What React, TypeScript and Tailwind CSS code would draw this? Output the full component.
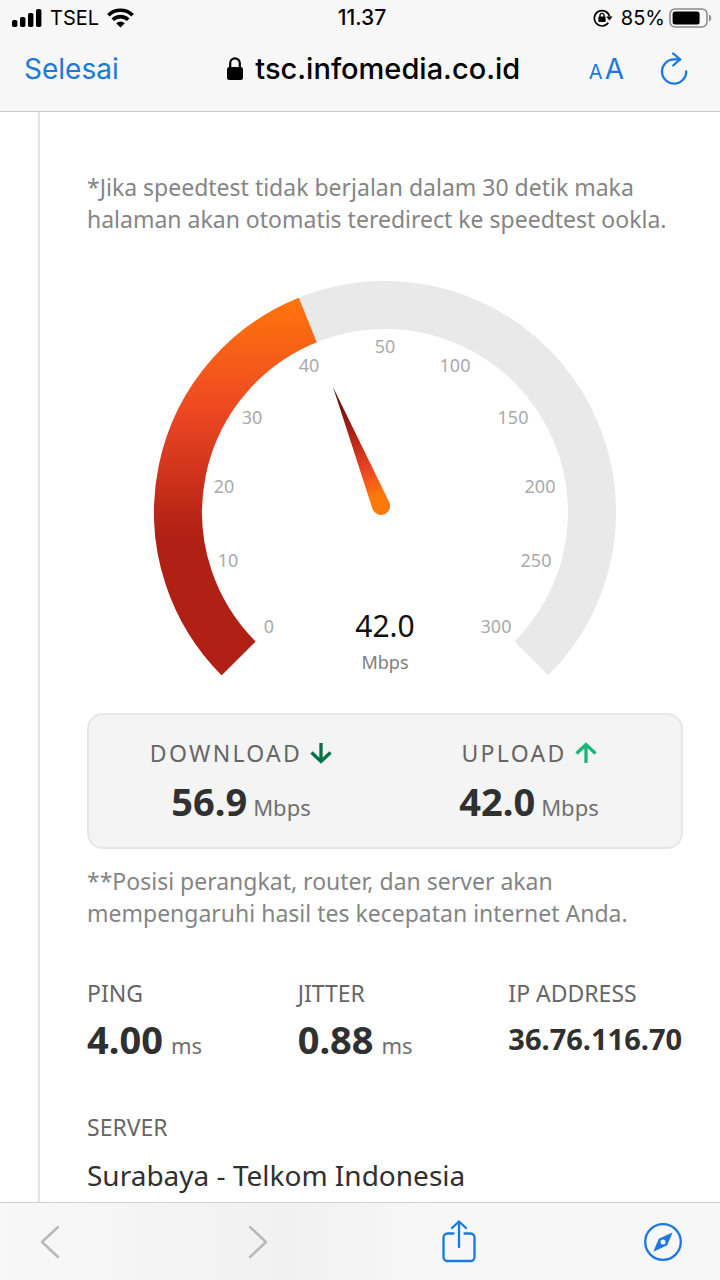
import React from "react";

type Tick = { value: number; x: number; y: number };

const ticks: Tick[] = [
  { value: 0, x: 115, y: 352 },
  { value: 10, x: 74, y: 286 },
  { value: 20, x: 70, y: 212 },
  { value: 30, x: 98, y: 143 },
  { value: 40, x: 155, y: 91 },
  { value: 50, x: 231, y: 72 },
  { value: 100, x: 301, y: 91 },
  { value: 150, x: 359, y: 143 },
  { value: 200, x: 386, y: 212 },
  { value: 250, x: 382, y: 286 },
  { value: 300, x: 342, y: 352 },
];

function StatusBar() {
  return (
    <div className="flex h-9 items-center px-2 text-xl text-black">
      <div className="flex flex-1 items-center gap-2 pl-1">
        <svg width="30" height="20" viewBox="0 0 30 20" aria-hidden="true">
          <rect x="0" y="12" width="5.4" height="7" rx="1.8" />
          <rect x="8" y="9" width="5.4" height="10" rx="1.8" />
          <rect x="16" y="5" width="5.4" height="14" rx="1.8" />
          <rect x="24" y="1" width="5.4" height="18" rx="1.8" />
        </svg>
        <span>TSEL</span>
        <svg width="27" height="20" viewBox="0 0 27 20" fill="none" stroke="#000" strokeWidth="3.6" aria-hidden="true">
          <path d="M1.4 7.2a17.2 17.2 0 0 1 24.2 0" />
          <path d="M5.8 11.8a11 11 0 0 1 15.4 0" />
          <path d="M13.5 19.4 9.2 15.2a6.2 6.2 0 0 1 8.6 0z" fill="#000" stroke="none" />
        </svg>
      </div>
      <span className="text-[21px] font-medium">11.37</span>
      <div className="flex flex-1 items-center justify-end gap-2">
        <svg width="20" height="20" viewBox="0 0 20 20" fill="none" stroke="#000" strokeWidth="1.7" aria-hidden="true">
          <path d="M15.3 14.8a7.7 7.7 0 1 1 1.3-6.1" />
          <path d="M13.2 8.4h6.4l-3.2 4.2z" fill="#000" stroke="none" />
          <rect x="5.4" y="8.6" width="7.2" height="5.4" rx=".8" fill="#000" stroke="none" />
          <path d="M7 9V7.3a2 2 0 0 1 4 0V9" strokeWidth="1.3" />
        </svg>
        <div className="flex items-center gap-1">
          <span>85%</span>
          <svg width="43" height="20" viewBox="0 0 43 20" aria-hidden="true">
            <rect x="1" y="1" width="37" height="18" rx="5" fill="none" stroke="#8b8b8b" strokeWidth="1.6" />
            <rect x="3.6" y="3.6" width="27" height="12.8" rx="2.5" />
            <path d="M40 6.5c3 1 3 6 0 7z" fill="#8b8b8b" />
          </svg>
        </div>
      </div>
    </div>
  );
}

function AddressBar() {
  return (
    <div className="flex h-[75px] items-center justify-between pr-8 pb-2.5 pl-6 text-[#1a78e0]">
      <button type="button" className="text-[28px]">Selesai</button>
      <div className="ml-10 flex items-center gap-3 text-black">
        <svg width="16" height="24" viewBox="0 0 16 24" aria-hidden="true">
          <rect x="0" y="10" width="16" height="13" rx="2.5" />
          <path d="M3.2 11V6.2a4.8 4.8 0 0 1 9.6 0V11" fill="none" stroke="#000" strokeWidth="2.2" />
        </svg>
        <span className="text-[29px] font-medium">tsc.infomedia.co.id</span>
      </div>
      <div className="flex items-center gap-9">
        <button type="button" aria-label="Ukuran teks" className="flex items-baseline gap-0.5">
          <span className="text-xl">A</span>
          <span className="text-[28px]">A</span>
        </button>
        <button type="button" aria-label="Muat ulang">
          <svg width="28" height="34" viewBox="0 0 28 34" fill="none" stroke="currentColor" strokeWidth="2.3" strokeLinecap="round" strokeLinejoin="round">
            <path d="M26.2 19.5A12.1 12.1 0 1 1 14.1 7.4h6" />
            <path d="m13.2 1.5 6.9 5.9-6.9 6.1" />
          </svg>
        </button>
      </div>
    </div>
  );
}

function Gauge() {
  return (
    <svg className="mx-auto w-full max-w-[462px]" viewBox="0 0 462 394" role="img" aria-label="42.0 Mbps">
      <defs>
        <linearGradient id="arc" gradientUnits="userSpaceOnUse" x1="0" y1="17" x2="0" y2="255">
          <stop offset="0" stopColor="#ff760b" />
          <stop offset=".47" stopColor="#ee4823" />
          <stop offset="1" stopColor="#b02014" />
        </linearGradient>
        <linearGradient id="needle" gradientUnits="userSpaceOnUse" x1="179" y1="106" x2="227" y2="224">
          <stop offset="0" stopColor="#501010" />
          <stop offset=".4" stopColor="#b02014" />
          <stop offset=".72" stopColor="#ee4823" />
          <stop offset=".92" stopColor="#ff780a" />
        </linearGradient>
      </defs>
      <path d="M84.6 377.4A207 207 0 1 1 377.4 377.4" fill="none" stroke="#e9e9e9" strokeWidth="48" />
      <path d="M84.6 377.4A207 207 0 0 1 153.8 39" fill="none" stroke="url(#arc)" strokeWidth="48" />
      <path d="M179 106 235.4 221.5A9 9 0 0 1 218.7 228.4z" fill="url(#needle)" />
      <g fill="#aaaaaa" fontSize="18" textAnchor="middle">
        {ticks.map((t) => (
          <text key={t.value} x={t.x} y={t.y}>{t.value}</text>
        ))}
      </g>
      <text x="231" y="356" fontSize="30" textAnchor="middle" fill="#111">42.0</text>
      <text x="231" y="388" fontSize="18" textAnchor="middle" fill="#808080">Mbps</text>
    </svg>
  );
}

function Arrow({ up = false }: { up?: boolean }) {
  return (
    <svg width="22" height="22" viewBox="0 0 22 22" fill="none" stroke={up ? "#19b67c" : "#087047"} strokeWidth="3.3" aria-hidden="true">
      {up ? <path d="M11 21V3M1.5 11.5 11 2.5l9.5 9" /> : <path d="M11 1v18M1.5 10.5 11 19.5l9.5-9" />}
    </svg>
  );
}

function Speed({ label, value, up = false }: { label: string; value: string; up?: boolean }) {
  return (
    <div className="flex flex-col items-center">
      <div className="flex items-center gap-2 text-[23px] leading-8 text-[#666]">
        <span className="tracking-widest">{label}</span>
        <Arrow up={up} />
      </div>
      <div className="mt-2 flex items-baseline gap-1.5 leading-[48px]">
        <span className="text-[38px] font-bold text-[#303030]">{value}</span>
        <span className="text-[22px] text-[#707070]">Mbps</span>
      </div>
    </div>
  );
}

function Metric({ label, value, unit }: { label: string; value: string; unit?: string }) {
  return (
    <div>
      <div className="text-[23px] leading-8 text-[#666]">{label}</div>
      <div className="mt-1 flex items-baseline gap-2 leading-[52px] whitespace-nowrap">
        <span className={unit ? "text-[38px] font-bold text-[#303030]" : "text-[29px] font-bold text-[#303030]"}>{value}</span>
        {unit && <span className="text-[22px] text-[#707070]">{unit}</span>}
      </div>
    </div>
  );
}

function Toolbar() {
  return (
    <nav className="sticky bottom-0 flex h-[78px] shrink-0 items-center justify-between border-t border-[#cfcfcf] bg-linear-to-r from-[#f8f8f8] via-[#f1f1f1] via-40% to-[#f7f7f7] to-60% pr-[37px] pl-[30px] text-[#1a78e0]">
      <button type="button" aria-label="Kembali" className="flex w-10 justify-center text-[#b8b8b8]">
        <svg width="30" height="34" viewBox="0 0 30 34" fill="none" stroke="currentColor" strokeWidth="2.4" strokeLinecap="round" strokeLinejoin="round">
          <path d="M23 2 7 17l16 15" />
        </svg>
      </button>
      <button type="button" aria-label="Maju" className="flex w-10 justify-center text-[#b8b8b8]">
        <svg width="30" height="34" viewBox="0 0 30 34" fill="none" stroke="currentColor" strokeWidth="2.4" strokeLinecap="round" strokeLinejoin="round">
          <path d="m11 2 16 15-16 15" />
        </svg>
      </button>
      <button type="button" aria-label="Bagikan" className="flex w-10 justify-center">
        <svg width="34" height="44" viewBox="0 0 34 44" fill="none" stroke="currentColor" strokeWidth="2.3" strokeLinecap="round" strokeLinejoin="round">
          <path d="M11.500 13.500H5.500a4 4 0 0 0-4 4V37a4 4 0 0 0 4 4h23a4 4 0 0 0 4-4V17.500a4 4 0 0 0-4-4h-6" />
          <path d="M17 27V1.500M10 8l7-6.500L24 8" />
        </svg>
      </button>
      <button type="button" aria-label="Buka di Safari" className="flex w-10 justify-center">
        <svg width="40" height="40" viewBox="0 0 40 40" fill="none" stroke="currentColor" strokeWidth="2.3">
          <circle cx="20" cy="20" r="17.8" />
          <path d="M29.500 10.500 24.200 23.200 10.300 29.700 15.800 16.800z" fill="currentColor" stroke="none" />
          <circle cx="20" cy="20" r="2.500" fill="#f7f7f7" stroke="none" />
        </svg>
      </button>
    </nav>
  );
}

export default function App() {
  return (
    <div className="flex min-h-screen flex-col bg-white font-['Noto_Sans',sans-serif]">
      <header className="border-b border-[#c8c8c8] bg-[#f7f7f7] font-[Inter,sans-serif]">
        <StatusBar />
        <AddressBar />
      </header>
      <main className="ml-[38px] flex-1 border-l-2 border-[#e4e4e4] pt-[59px] pr-[37px] pl-[47px]">
        <p className="text-[23px] leading-8 text-[#858585]">
          *Jika speedtest tidak berjalan dalam 30 detik maka halaman akan otomatis teredirect ke speedtest ookla.
        </p>
        <div className="mt-[46px]">
          <Gauge />
        </div>
        <section className="mt-[38px] grid grid-cols-2 rounded-2xl border-2 border-[#e6e6e6] bg-[#f4f4f4] px-2 pt-[22px] pb-4">
          <Speed label="DOWNLOAD" value="56.9" />
          <Speed label="UPLOAD" value="42.0" up />
        </section>
        <p className="mt-4 text-[23px] leading-8 text-[#858585]">
          **Posisi perangkat, router, dan server akan mempengaruhi hasil tes kecepatan internet Anda.
        </p>
        <section className="mt-12 grid grid-cols-3 gap-9">
          <Metric label="PING" value="4.00" unit="ms" />
          <Metric label="JITTER" value="0.88" unit="ms" />
          <Metric label="IP ADDRESS" value="36.76.116.70" />
        </section>
        <section className="mt-10">
          <div className="text-[23px] leading-8 text-[#666]">SERVER</div>
          <div className="mt-3 text-[28px] leading-10 text-[#303030]">Surabaya - Telkom Indonesia</div>
        </section>
      </main>
      <Toolbar />
    </div>
  );
}
